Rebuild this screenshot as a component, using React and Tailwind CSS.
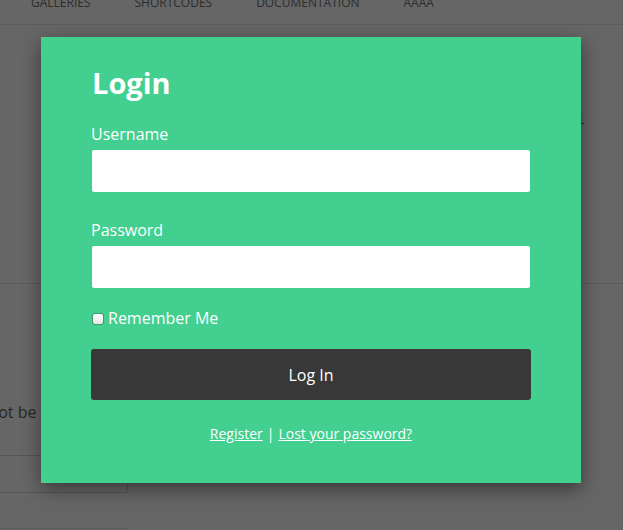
import React from "react";

export default function App() {
  const font = { fontFamily: '"Open Sans", "Noto Sans", sans-serif' };
  return (
    <div
      className="relative w-[623px] h-[530px] overflow-hidden bg-[#666666] text-[#262626]"
      style={font}
    >
      {/* dimmed background page */}
      <div className="flex items-start h-[25px] border-b border-[#5c5c5c]">
        <nav className="flex gap-[44px] pl-[31px] -mt-[5px] text-[12px] leading-[16px] text-[#2c2c2c]">
          <span>GALLERIES</span>
          <span>SHORTCODES</span>
          <span>DOCUMENTATION</span>
          <span>AAAA</span>
        </nav>
      </div>
      <div className="flex justify-end pr-[39px] pt-[82px]">
        <span className="text-[14px] leading-[20px] underline text-[#262626]">1</span>
      </div>
      <div className="mt-[156px] border-t border-[#5c5c5c] w-full"></div>
      <div className="mt-[116px] -ml-[38px] text-[16px] leading-[24px] whitespace-nowrap">
        cannot be published
      </div>
      <div className="mt-[31px] w-[128px] h-[38px] border border-[#555555] rounded-br-[3px] border-l-0"></div>
      <div className="mt-[35px] w-[128px] border-t border-[#5c5c5c]"></div>

      {/* modal */}
      <div className="absolute left-[41px] top-[37px] w-[540px] h-[446px] bg-[#43cf8f] shadow-[0_6px_18px_rgba(0,0,0,0.45)] pt-[29px] px-[50px] text-white">
        <h2 className="text-[29px] leading-[34px] font-bold pl-[1px]">Login</h2>
        <label className="block mt-[22px] text-[16px] leading-[24px] font-medium">Username</label>
        <input
          type="text"
          className="block mt-[4px] mx-[1px] w-[438px] h-[42px] bg-white rounded-[2px] outline-none"
        />
        <label className="block mt-[26px] text-[16px] leading-[24px] font-medium">Password</label>
        <input
          type="password"
          className="block mt-[4px] mx-[1px] w-[438px] h-[42px] bg-white rounded-[2px] outline-none"
        />
        <div className="flex items-center mt-[18px] h-[24px]">
          <span className="ml-[1px] mt-[2px] w-[12px] h-[12px] rounded-[3px] border border-[#3d9a6e] bg-gradient-to-b from-white to-[#e6e6e6]"></span>
          <span className="ml-[4px] text-[16px] leading-[24px] font-medium">Remember Me</span>
        </div>
        <button className="mt-[19px] w-[440px] h-[51px] rounded-[3px] bg-[#383838] text-white text-[16px] font-medium">
          Log In
        </button>
        <div className="mt-[24px] text-center text-[14px] leading-[20px] font-medium">
          <a className="underline">Register</a>
          <span className="mx-[4px]">|</span>
          <a className="underline">Lost your password?</a>
        </div>
      </div>
    </div>
  );
}
